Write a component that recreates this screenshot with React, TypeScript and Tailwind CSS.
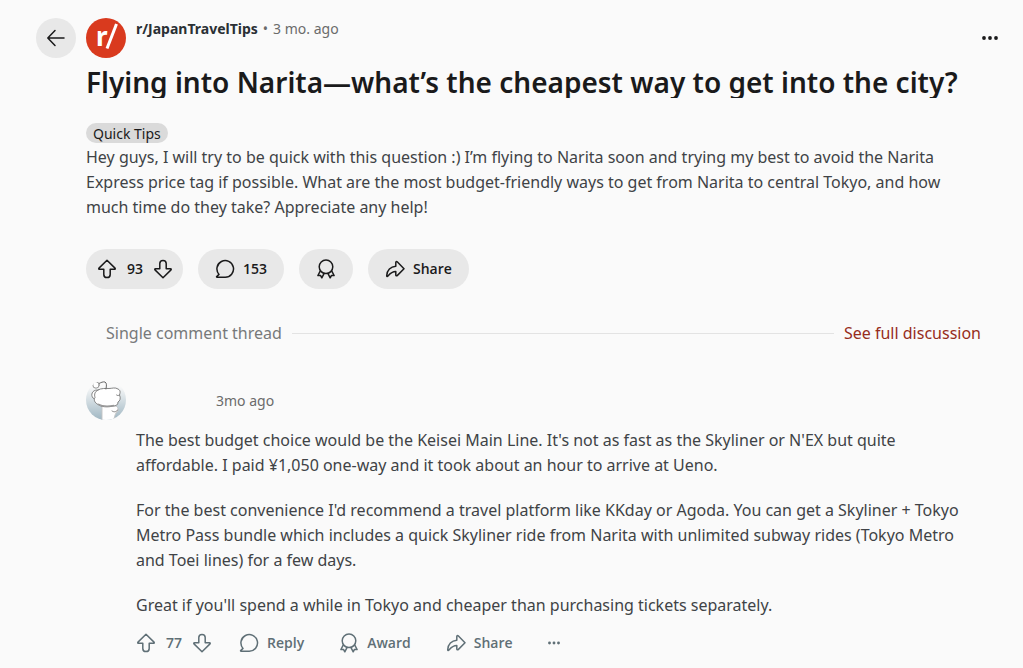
import React from 'react'
import clsx from 'clsx'

type IconProps = { className?: string }

const stroke = {
  viewBox: '0 0 20 20',
  fill: 'none',
  stroke: 'currentColor',
  strokeWidth: 1.5,
  strokeLinejoin: 'round',
  strokeLinecap: 'round',
  'aria-hidden': true,
} as const

const VoteIcon = ({ className }: IconProps) => (
  <svg {...stroke} className={clsx('h-5 w-5', className)}>
    <path d="M10 1.2 2 9.1c-.5.5-.2 1.2.5 1.2h4.3v5.1c0 1.9 1.3 3.2 3.2 3.2s3.2-1.3 3.2-3.2v-5.1h4.3c.7 0 1-.7.5-1.2Z" />
  </svg>
)

const CommentIcon = ({ className }: IconProps) => (
  <svg {...stroke} className={clsx('h-5 w-5', className)}>
    <path d="M10 18.2H2c-.4 0-.5-.4-.3-.6l2.3-2.2A8.3 8.3 0 1 1 10 18.2Z" />
  </svg>
)

const AwardIcon = ({ className }: IconProps) => (
  <svg {...stroke} className={clsx('h-5 w-5', className)}>
    <circle cx="10" cy="7.8" r="6.8" />
    <path d="M4.2 12.2 1.9 16.5l2.6-.1 1.3 2.400 2.200-4.200M15.800 12.200l2.300 4.300-2.600-.1-1.300 2.400-2.200-4.200" />
  </svg>
)

const ShareIcon = ({ className }: IconProps) => (
  <svg {...stroke} className={clsx('h-5 w-5', className)}>
    <path d="M10.8 7.2V3.4c0-.8.8-1.1 1.4-.6l6.8 7-6.8 6.8c-.6.5-1.4.2-1.4-.6v-3.5c-4.3.1-5.7 2-7.9 4.6-.5.6-1.2.4-1.2-.4.2-5.400 3.900-9.200 9.100-9.500Z" />
  </svg>
)

const DotsIcon = ({ className }: IconProps) => (
  <svg viewBox="0 0 16 16" fill="currentColor" aria-hidden className={className}>
    <circle cx="2" cy="8" r="1.9" />
    <circle cx="8" cy="8" r="1.9" />
    <circle cx="14" cy="8" r="1.9" />
  </svg>
)

const BackIcon = () => (
  <svg {...stroke} className="h-5 w-5">
    <path d="M18 10H2M9 2.500 1.800 10 9 17.500" />
  </svg>
)

const SubredditIcon = () => (
  <svg viewBox="0 0 40 40" className="h-10 w-10 shrink-0">
    <circle cx="20" cy="20" r="20" fill="#d93a1e" />
    <text x="10" y="28" fill="#fff" fontSize="26" fontWeight="700">
      r
    </text>
    <path d="M30.500 6 21 30.500" stroke="#fff" strokeWidth="3" />
  </svg>
)

const UserAvatar = () => (
  <svg viewBox="0 0 40 40" className="h-10 w-10 shrink-0" role="img" aria-label="User avatar">
    <defs>
      <linearGradient id="sky" x1="0" y1="0" x2="0" y2="1">
        <stop offset="0.15" stopColor="#fafafa" />
        <stop offset="1" stopColor="#9fb6c2" />
      </linearGradient>
      <clipPath id="round">
        <circle cx="20" cy="20" r="20" />
      </clipPath>
    </defs>
    <g clipPath="url(#round)">
      <rect width="40" height="40" fill="url(#sky)" />
      <g fill="#fff" stroke="#777" strokeWidth="0.9" strokeLinecap="round" strokeLinejoin="round">
        <path d="M16 41V26h14c2.500 1.500 3 5 0 7-1 2-2 4-2 8Z" stroke="#c4c4c4" />
        <path d="M11 10c-5 0-6.500 5-4 8l3 2Z" />
        <path d="M12 10c3-2 8-1.500 11-1.500S29 7 32 9c3 1.500 2 4 1.500 6 1.500 3 .5 6-1.500 7 0 3-2 4-5 4-5 1.500-12 1-15-1.500C8.500 22.500 7.500 20 9 17.500 8 14 9 11.500 12 10Z" />
        <path d="M20 9c.5-3 1-6-1-7-2-.5-4 .5-6 1.500" fill="none" stroke="#555" />
        <circle cx="10" cy="5" r="3.200" stroke="#888" />
        <path d="M33.500 15c-1 1-2.500.5-3 0M26 31c2 1.500 5 1 5.500-1" fill="none" />
      </g>
      <path d="M12 24c4 2.500 11 2.500 16 1.500" fill="none" stroke="#999" strokeWidth="1.400" />
    </g>
  </svg>
)

const pill =
  'flex h-10 items-center rounded-full bg-[#e8e8e8] text-sm font-semibold text-[#1a1a1b]'

const paragraphs = [
  "The best budget choice would be the Keisei Main Line. It's not as fast as the Skyliner or N'EX but quite affordable. I paid ¥1,050 one-way and it took about an hour to arrive at Ueno.",
  "For the best convenience I'd recommend a travel platform like KKday or Agoda. You can get a Skyliner + Tokyo Metro Pass bundle which includes a quick Skyliner ride from Narita with unlimited subway rides (Tokyo Metro and Toei lines) for a few days.",
  "Great if you'll spend a while in Tokyo and cheaper than purchasing tickets separately.",
]

const PostActions = () => (
  <div className="mt-[29px] flex gap-[15px] font-['Open_Sans',sans-serif]">
    <div className={clsx(pill, 'gap-2 pr-[10px] pl-[11px]')}>
      <button type="button" aria-label="Upvote">
        <VoteIcon />
      </button>
      <span className="w-5 text-center">93</span>
      <button type="button" aria-label="Downvote">
        <VoteIcon className="rotate-180" />
      </button>
    </div>
    <button type="button" className={clsx(pill, 'gap-2 px-[17px]')}>
      <CommentIcon />
      153
    </button>
    <button type="button" aria-label="Give award" className={clsx(pill, 'px-[17px]')}>
      <AwardIcon />
    </button>
    <button type="button" className={clsx(pill, 'gap-2 px-[17px]')}>
      <ShareIcon />
      Share
    </button>
  </div>
)

const Comment = () => (
  <article className="mt-[35px]">
    <header className="flex h-10 items-center">
      <UserAvatar />
      <time className="ml-[90px] pt-0.5 text-sm text-[#6b6b6b]">3mo ago</time>
    </header>
    <div className="mt-2 ml-[50px] space-y-5 pr-8 text-base leading-[25px] text-[#404346]">
      {paragraphs.map((text) => (
        <p key={text}>{text}</p>
      ))}
    </div>
    <footer className="mt-[15px] ml-[50px] flex h-5 items-center font-['Open_Sans',sans-serif] text-sm font-semibold text-[#5f6f76]">
      <button type="button" aria-label="Upvote">
        <VoteIcon />
      </button>
      <span className="mx-2 w-5 text-center">77</span>
      <button type="button" aria-label="Downvote">
        <VoteIcon className="rotate-180" />
      </button>
      <div className="ml-[27px] flex items-center gap-[35px]">
        <button type="button" className="flex items-center gap-2">
          <CommentIcon />
          Reply
        </button>
        <button type="button" className="flex items-center gap-2">
          <AwardIcon />
          Award
        </button>
        <button type="button" className="flex items-center gap-2">
          <ShareIcon />
          Share
        </button>
        <button type="button" aria-label="More comment options">
          <DotsIcon className="h-3 w-3" />
        </button>
      </div>
    </footer>
  </article>
)

const App = () => {
  return (
    <main className="flex min-h-screen items-start gap-[10px] bg-[#fafafa] pt-[18px] pr-6 pb-[15px] pl-9 font-['Noto_Sans','Open_Sans',sans-serif]">
      <button
        type="button"
        aria-label="Back"
        className="flex h-10 w-10 shrink-0 items-center justify-center rounded-full bg-[#e8e8e8] text-[#1a1a1b]"
      >
        <BackIcon />
      </button>

      <div className="min-w-0 flex-1">
        <header className="flex gap-[10px]">
          <SubredditIcon />
          <div className="flex h-[22px] items-center gap-[5px] text-sm text-[#6b6b6b]">
            <a href="#subreddit" className="font-bold text-[#2a3034]">
              r/JapanTravelTips
            </a>
            <span>•</span>
            <time>3 mo. ago</time>
          </div>
          <button
            type="button"
            aria-label="More post options"
            className="mt-3 mr-px ml-auto h-4 w-4 text-[#1a1a1b]"
          >
            <DotsIcon className="h-4 w-4" />
          </button>
        </header>

        {/* title box is shorter than its line, so descenders are trimmed */}
        <h1 className="mt-1 h-9 overflow-hidden text-[28px] leading-10 font-semibold whitespace-nowrap text-[#1a1a1b]">
          Flying into Narita—what’s the cheapest way to get into the city?
        </h1>
        <div className="mt-[25px] flex">
          <span className="flex h-5 items-center rounded-full bg-[#dadada] px-[7px] pt-0.5 text-sm text-[#1a1a1b]">
            Quick Tips
          </span>
        </div>
        <p className="mt-0.5 pr-6 text-base leading-[25px] text-[#404346]">
          Hey guys, I will try to be quick with this question :) I’m flying to Narita soon and trying my
          best to avoid the Narita Express price tag if possible. What are the most budget-friendly ways
          to get from Narita to central Tokyo, and how much time do they take? Appreciate any help!
        </p>

        <PostActions />

        <div className="mt-8 flex items-center gap-[10px] pr-[18px] pl-5 text-base leading-6">
          <span className="text-[#77797a]">Single comment thread</span>
          <hr className="flex-1 border-[#e3e3e3]" />
          <a href="#discussion" className="text-[#962d1c]">
            See full discussion
          </a>
        </div>

        <Comment />
      </div>
    </main>
  )
}

export default App
